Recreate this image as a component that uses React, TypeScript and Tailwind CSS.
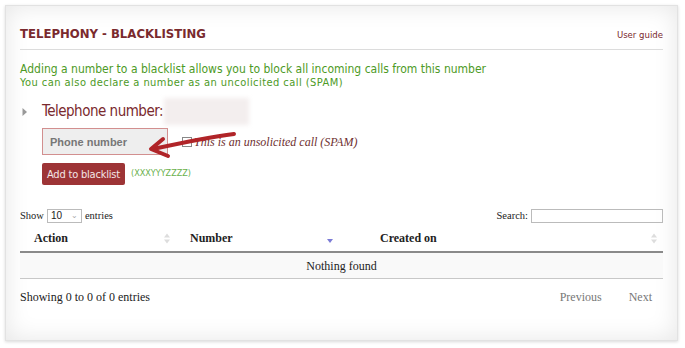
import { useState } from "react"

const cond = { fontFamily: '"DejaVu Sans Condensed", "DejaVu Sans", sans-serif' }

function SortIcon({ active }: { active?: boolean }) {
  if (active) {
    return (
      <svg width="8" height="8" viewBox="0 0 8 8" className="mt-1">
        <path d="M1 3 L7 3 L4 7 Z" fill="#7b7bd6" />
      </svg>
    )
  }
  return (
    <svg width="6" height="11" viewBox="0 0 6 11">
      <path d="M0 4.5 L3 0.5 L6 4.5 Z" fill="#ddd" />
      <path d="M0 6.5 L3 10.5 L6 6.5 Z" fill="#ddd" />
    </svg>
  )
}

export default function App() {
  const [phone, setPhone] = useState("")

  return (
    <div className="w-[685px] h-[348px] bg-white p-[5px] pr-[7px] pb-[7px]">
      <div className="relative h-full border border-[#e2e2e2] bg-white shadow-[inset_0_0_24px_rgba(0,0,0,0.1),0_1px_3px_rgba(0,0,0,0.15)] px-[14px]">
        {/* header */}
        <div className="flex items-end justify-between h-[44px] pb-[9px] border-b border-[#dcdcdc]" style={cond}>
          <h1 className="text-[13px] font-bold text-[#7a2a2e] leading-none">TELEPHONY - BLACKLISTING</h1>
          <a className="text-[9.5px] text-[#7a2a2e] leading-none mb-[1px]">User guide</a>
        </div>

        <div style={cond} className="mt-[13px] text-[#4d9a26] leading-none">
          <p className="text-[12px]">Adding a number to a blacklist allows you to block all incoming calls from this number</p>
          <p className="text-[11px] tracking-[0.45px] mt-[2px]">You can also declare a number as an uncolicited call (SPAM)</p>
        </div>

        {/* form */}
        <div className="mt-[10px] flex items-center" style={cond}>
          <svg width="6" height="10" viewBox="0 0 6 10" className="ml-[2px]">
            <path d="M0.5 1 L5 5 L0.5 9 Z" fill="#999" />
          </svg>
          <span className="ml-[14px] text-[15px] tracking-[-0.5px] text-[#7a2a2e] leading-none">Telephone number:</span>
          <div className="ml-[1px] w-[85px] h-[27px] bg-[#f3eeee] blur-[2px]" />
        </div>

        <div className="mt-[3px] ml-[22px] flex items-center">
          <input
            value={phone}
            onChange={(e) => setPhone(e.target.value)}
            placeholder="Phone number"
            className="w-[126px] h-[27px] border border-[#d28f8f] bg-[#eeeeee] px-[7px] text-[11px] font-bold text-[#666] placeholder:text-[#777] outline-none"
            style={{ fontFamily: '"Liberation Sans", Arial, sans-serif' }}
          />
          <label className="ml-[14px] flex items-center text-[12px] italic text-[#6e2f30]" style={{ fontFamily: '"Liberation Serif", serif' }}>
            <span className="w-[10px] h-[10px] border border-[#888] bg-white mr-[2px]" />
            This is an unsolicited call (SPAM)
          </label>
        </div>

        <div className="mt-[8px] ml-[22px] flex items-center" style={cond}>
          <button className="h-[22px] px-[5px] rounded-[2px] bg-[#9d3436] text-[11px] tracking-[-0.2px] text-[#f3e6e6] leading-none">Add to blacklist</button>
          <span className="ml-[6px] text-[9px] text-[#6ab04c]">(XXXYYYZZZZ)</span>
        </div>

        {/* table */}
        <div style={{ fontFamily: '"Liberation Serif", serif' }} className="mt-[23px] text-[#222]">
          <div className="flex items-center justify-between text-[10.5px] h-[15px]">
            <div className="flex items-center">
              Show
              <span className="mx-[3px] w-[35px] h-[14px] border border-[#bbb] flex items-center justify-between px-[3px] text-[10px]" style={{ fontFamily: '"Liberation Sans", sans-serif' }}>
                10 <span className="text-[#aaa] text-[8px]">⌄</span>
              </span>
              entries
            </div>
            <div className="flex items-center">
              Search:
              <span className="ml-[3px] w-[132px] h-[14px] border border-[#bbb]" />
            </div>
          </div>

          <div className="mt-[2px] flex items-center h-[28px] border-b-2 border-[#8a8a8a] text-[12px] font-bold">
            <div className="w-[156px] pl-[14px] pr-[6px] flex items-center justify-between">
              Action <SortIcon />
            </div>
            <div className="w-[196px] pl-[14px] pr-[38px] flex items-center justify-between">
              Number <SortIcon active />
            </div>
            <div className="flex-1 pl-[8px] pr-[6px] flex items-center justify-between">
              Created on <SortIcon />
            </div>
          </div>
          <div className="h-[26px] flex items-center justify-center bg-[#f9f9f9] border-b border-[#c8c8c8] text-[12px]">Nothing found</div>

          <div className="mt-[9px] flex items-center justify-between text-[12px]">
            <span>Showing 0 to 0 of 0 entries</span>
            <div className="flex gap-[27px] pr-[11px] text-[#777]">
              <span>Previous</span>
              <span>Next</span>
            </div>
          </div>
        </div>

        {/* annotation arrow */}
        <svg className="absolute left-[135px] top-[119px]" width="100" height="36" viewBox="0 0 100 36">
          <path d="M93 9 C70 12, 40 18, 12 24" stroke="#b02428" strokeWidth="4" fill="none" strokeLinecap="round" />
          <path d="M22 14 L10 24 L27 31" stroke="#b02428" strokeWidth="4" fill="none" strokeLinecap="round" strokeLinejoin="round" />
        </svg>
      </div>
    </div>
  )
}
